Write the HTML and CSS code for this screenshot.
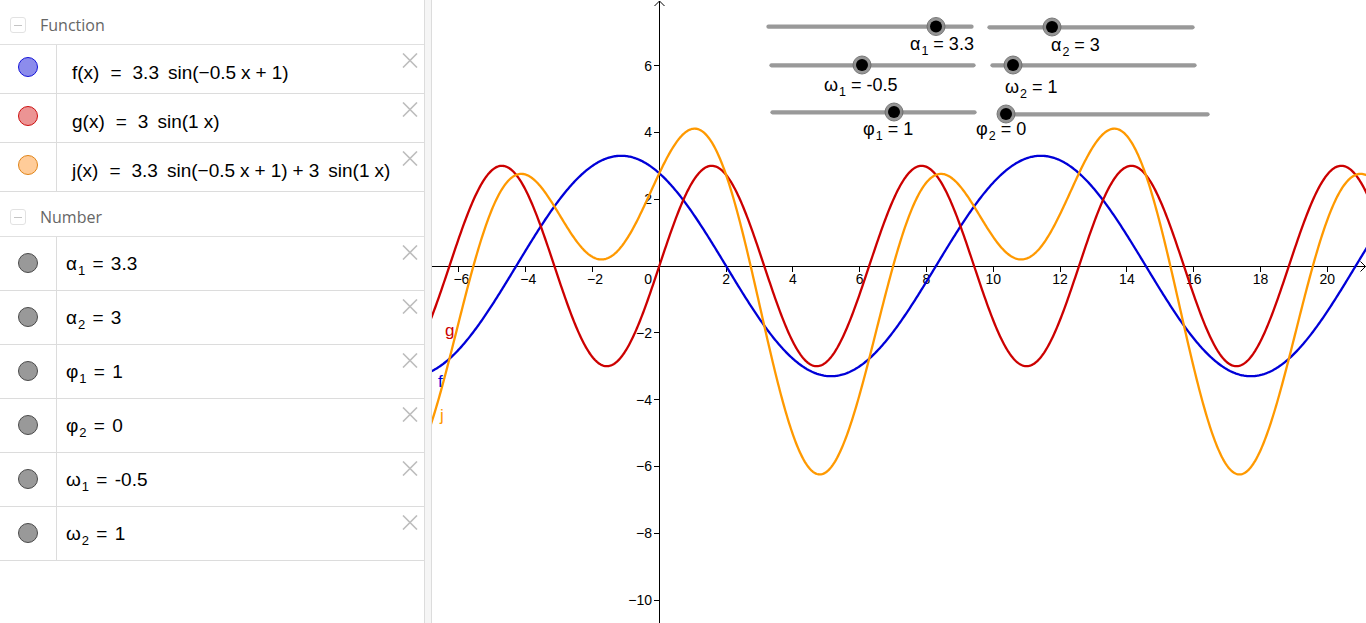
FILE: index.html
```html
<!DOCTYPE html>
<html lang="en">
<head>
<meta charset="utf-8">
<title>Graphing</title>
<link rel="stylesheet" href="styles.css">
</head>
<body>
<div class="app">
  <aside class="algebra">
    <div class="group-header"><span class="collapse"><span class="collapse-bar"></span></span><span class="group-title">Function</span></div>

    <div class="row fn-row">
      <div class="marker-cell"><span class="marker marker-f"></span></div>
      <div class="expr fn-expr">f(x)<span class="eq">=</span>3.3<span class="fn">sin(</span>−0.5<span class="th">x</span><span class="op">+</span>1)</div>
      <button class="close" aria-label="delete"><svg width="16" height="15" viewBox="0 0 16 15"><path d="M1 0.5L15 14.5M15 0.5L1 14.5"/></svg></button>
    </div>
    <div class="row fn-row">
      <div class="marker-cell"><span class="marker marker-g"></span></div>
      <div class="expr fn-expr">g(x)<span class="eq">=</span>3<span class="fn">sin(</span>1<span class="th">x</span>)</div>
      <button class="close" aria-label="delete"><svg width="16" height="15" viewBox="0 0 16 15"><path d="M1 0.5L15 14.5M15 0.5L1 14.5"/></svg></button>
    </div>
    <div class="row fn-row">
      <div class="marker-cell"><span class="marker marker-j"></span></div>
      <div class="expr fn-expr">j(x)<span class="eq">=</span>3.3<span class="fn">sin(</span>−0.5<span class="th">x</span><span class="op">+</span>1)<span class="op">+</span>3<span class="fn">sin(</span>1<span class="th">x</span>)</div>
      <button class="close" aria-label="delete"><svg width="16" height="15" viewBox="0 0 16 15"><path d="M1 0.5L15 14.5M15 0.5L1 14.5"/></svg></button>
    </div>

    <div class="group-header"><span class="collapse"><span class="collapse-bar"></span></span><span class="group-title">Number</span></div>

    <div class="row num-row">
      <div class="marker-cell"><span class="marker marker-n"></span></div>
      <div class="expr num-expr">α<sub>1</sub> = 3.3</div>
      <button class="close" aria-label="delete"><svg width="16" height="15" viewBox="0 0 16 15"><path d="M1 0.5L15 14.5M15 0.5L1 14.5"/></svg></button>
    </div>
    <div class="row num-row">
      <div class="marker-cell"><span class="marker marker-n"></span></div>
      <div class="expr num-expr">α<sub>2</sub> = 3</div>
      <button class="close" aria-label="delete"><svg width="16" height="15" viewBox="0 0 16 15"><path d="M1 0.5L15 14.5M15 0.5L1 14.5"/></svg></button>
    </div>
    <div class="row num-row">
      <div class="marker-cell"><span class="marker marker-n"></span></div>
      <div class="expr num-expr">φ<sub>1</sub> = 1</div>
      <button class="close" aria-label="delete"><svg width="16" height="15" viewBox="0 0 16 15"><path d="M1 0.5L15 14.5M15 0.5L1 14.5"/></svg></button>
    </div>
    <div class="row num-row">
      <div class="marker-cell"><span class="marker marker-n"></span></div>
      <div class="expr num-expr">φ<sub>2</sub> = 0</div>
      <button class="close" aria-label="delete"><svg width="16" height="15" viewBox="0 0 16 15"><path d="M1 0.5L15 14.5M15 0.5L1 14.5"/></svg></button>
    </div>
    <div class="row num-row">
      <div class="marker-cell"><span class="marker marker-n"></span></div>
      <div class="expr num-expr">ω<sub>1</sub> = -0.5</div>
      <button class="close" aria-label="delete"><svg width="16" height="15" viewBox="0 0 16 15"><path d="M1 0.5L15 14.5M15 0.5L1 14.5"/></svg></button>
    </div>
    <div class="row num-row">
      <div class="marker-cell"><span class="marker marker-n"></span></div>
      <div class="expr num-expr">ω<sub>2</sub> = 1</div>
      <button class="close" aria-label="delete"><svg width="16" height="15" viewBox="0 0 16 15"><path d="M1 0.5L15 14.5M15 0.5L1 14.5"/></svg></button>
    </div>
  </aside>

  <div class="splitter"></div>

  <main class="graph">
    <svg class="plot" width="934" height="623" viewBox="432 0 934 623">
      <g class="axes">
        <path d="M432 266.5H1365.5M1360.5 261.5L1365.5 266.5L1360.5 271.5"/>
        <path d="M659.5 623V1M654.5 6L659.5 1L664.5 6"/>
        <path d="M458.5 267v5M525.5 267v5M592.5 267v5M726.5 267v5M792.5 267v5M859.5 267v5M926.5 267v5M993.5 267v5M1060.5 267v5M1126.5 267v5M1193.5 267v5M1260.5 267v5M1327.5 267v5"/>
        <path d="M654 65.5h5M654 132.5h5M654 199.5h5M654 332.5h5M654 399.5h5M654 466.5h5M654 533.5h5M654 600.5h5"/>
      </g>
      <g class="ticks-x">
        <text x="461.4" y="283.5">−6</text>
        <text x="528.2" y="283.5">−4</text>
        <text x="595" y="283.5">−2</text>
        <text x="726.1" y="283.5">2</text>
        <text x="792.9" y="283.5">4</text>
        <text x="859.7" y="283.5">6</text>
        <text x="926.5" y="283.5">8</text>
        <text x="993.3" y="283.5">10</text>
        <text x="1060.1" y="283.5">12</text>
        <text x="1126.9" y="283.5">14</text>
        <text x="1193.7" y="283.5">16</text>
        <text x="1260.5" y="283.5">18</text>
        <text x="1327.3" y="283.5">20</text>
      </g>
      <g class="ticks-y">
        <text x="652" y="283.5">0</text>
        <text x="652" y="70.6">6</text>
        <text x="652" y="137.4">4</text>
        <text x="652" y="204.2">2</text>
        <text x="652" y="337.8">−2</text>
        <text x="652" y="404.6">−4</text>
        <text x="652" y="471.4">−6</text>
        <text x="652" y="538.2">−8</text>
        <text x="652" y="605">−10</text>
      </g>

      <polyline id="curve-f" class="curve curve-f" points=""/>
      <polyline id="curve-g" class="curve curve-g" points=""/>
      <polyline id="curve-j" class="curve curve-j" points=""/>

      <text class="flabel flabel-g" x="445" y="336">g</text>
      <text class="flabel flabel-f" x="438" y="387">f</text>
      <text class="flabel flabel-j" x="440" y="421">j</text>

      <g class="slider">
        <line x1="768.5" y1="26.7" x2="971.5" y2="26.7"/>
        <circle class="halo" cx="936" cy="26.5" r="9"/><circle class="knob" cx="936" cy="26.5" r="6"/>
        <text x="910" y="49.5">α<tspan class="sub" dx="1" dy="5">1</tspan><tspan dy="-5"> = 3.3</tspan></text>
      </g>
      <g class="slider">
        <line x1="989.5" y1="27.3" x2="1192.5" y2="27.3"/>
        <circle class="halo" cx="1052" cy="27" r="9"/><circle class="knob" cx="1052" cy="27" r="6"/>
        <text x="1051" y="50.5">α<tspan class="sub" dx="1" dy="5">2</tspan><tspan dy="-5"> = 3</tspan></text>
      </g>
      <g class="slider">
        <line x1="771.5" y1="65.3" x2="973.5" y2="65.3"/>
        <circle class="halo" cx="862" cy="65" r="9"/><circle class="knob" cx="862" cy="65" r="6"/>
        <text x="824" y="90.5">ω<tspan class="sub" dx="1" dy="5">1</tspan><tspan dy="-5"> = -0.5</tspan></text>
      </g>
      <g class="slider">
        <line x1="992.5" y1="65.3" x2="1194.5" y2="65.3"/>
        <circle class="halo" cx="1013" cy="65" r="9"/><circle class="knob" cx="1013" cy="65" r="6"/>
        <text x="1005" y="93">ω<tspan class="sub" dx="1" dy="5">2</tspan><tspan dy="-5"> = 1</tspan></text>
      </g>
      <g class="slider">
        <line x1="772.5" y1="112.3" x2="974.5" y2="112.3"/>
        <circle class="halo" cx="894" cy="112" r="9"/><circle class="knob" cx="894" cy="112" r="6"/>
        <text x="863" y="135">φ<tspan class="sub" dx="1" dy="5">1</tspan><tspan dy="-5"> = 1</tspan></text>
      </g>
      <g class="slider">
        <line x1="1000.5" y1="114.3" x2="1207.5" y2="114.3"/>
        <circle class="halo" cx="1006" cy="114" r="9"/><circle class="knob" cx="1006" cy="114" r="6"/>
        <text x="976" y="135">φ<tspan class="sub" dx="1" dy="5">2</tspan><tspan dy="-5"> = 0</tspan></text>
      </g>
    </svg>
  </main>
</div>
<script src="script.js"></script>
</body>
</html>
```

FILE: styles.css
```css
* { box-sizing: border-box; margin: 0; padding: 0; }
html, body { width: 1366px; height: 623px; overflow: hidden; background: #fff; }
body { font-family: "Liberation Sans", Arial, sans-serif; color: #000; }

.app { display: flex; height: 623px; }

.algebra {
  flex: none;
  width: 425px;
  border-right: 1px solid #dcdcdc;
  display: flex;
  flex-direction: column;
  background: #fff;
}

.splitter {
  flex: none;
  width: 7px;
  background: #f5f5f5;
  border-right: 1px solid #dcdcdc;
}

.graph { flex: 1; background: #fff; overflow: hidden; }
.plot { display: block; }

/* group headers */
.group-header {
  height: 45px;
  flex: none;
  display: flex;
  align-items: center;
  padding: 6px 0 0 10px;
  border-bottom: 1px solid #e0e0e0;
}
.collapse {
  width: 16px;
  height: 16px;
  border: 1px solid #e2e2e2;
  border-radius: 3px;
  display: flex;
  align-items: center;
  justify-content: center;
  margin-right: 14px;
}
.collapse-bar { width: 8px; height: 1px; background: #c4c4c4; }
.group-title {
  font-family: "Open Sans", "Liberation Sans", sans-serif;
  font-size: 16px;
  color: #666;
}

/* rows */
.row {
  flex: none;
  display: flex;
  align-items: center;
  border-bottom: 1px solid #dcdcdc;
}
.fn-row { height: 49px; }
.num-row { height: 54px; }

.marker-cell {
  flex: none;
  width: 57px;
  align-self: stretch;
  border-right: 1px solid #dcdcdc;
  display: flex;
  align-items: center;
  justify-content: center;
}
.fn-row .marker-cell { padding-bottom: 4px; }
.num-row .marker-cell { padding-bottom: 2px; }

.marker {
  width: 20px;
  height: 20px;
  border-radius: 50%;
  border: 1.5px solid #444;
}
.marker-f { background: #8c8cec; border-color: #1414d8; }
.marker-g { background: #ec9494; border-color: #cc1010; }
.marker-j { background: #ffcc99; border-color: #e08418; }
.marker-n { background: #999; border-color: #4a4a4a; }

.expr { flex: 1; white-space: nowrap; }
.fn-expr {
  font-size: 19px;
  padding: 8px 0 0 15px;
}
.fn-expr .eq { margin: 0 11px; }
.fn-expr .fn { margin-left: 9px; }
.fn-expr .th { margin-left: 5px; }
.fn-expr .op { margin: 0 5px; }
.num-expr {
  font-size: 19px;
  padding: 0 0 0 9px;
  word-spacing: 2px;
}
.num-expr sub {
  font-size: 13px;
  vertical-align: -5px;
  line-height: 0;
  margin-left: 1px;
}

.close {
  flex: none;
  align-self: flex-start;
  margin: 8px 6px 0 0;
  width: 16px;
  height: 15px;
  border: none;
  background: none;
  display: flex;
}
.close svg path { stroke: #bdbdbd; stroke-width: 1.6; fill: none; }

/* graph */
.axes path { stroke: #000; stroke-width: 1; fill: none; }
.ticks-x text, .ticks-y text {
  font-family: "Liberation Sans", Arial, sans-serif;
  font-size: 14px;
  fill: #000;
}
.ticks-x text { text-anchor: middle; }
.ticks-y text { text-anchor: end; }

.curve { fill: none; stroke-width: 2.3; stroke-linejoin: round; stroke-linecap: round; }
.curve-f { stroke: #0000d8; }
.curve-g { stroke: #cc0000; }
.curve-j { stroke: #ff9900; }

.flabel { font-family: "Liberation Sans", Arial, sans-serif; font-size: 17px; }
.flabel-f { fill: #0000d8; }
.flabel-g { fill: #cc0000; }
.flabel-j { fill: #ff9900; }

.slider line { stroke: #999; stroke-width: 4.3; stroke-linecap: round; }
.slider .halo { fill: #8a8a8a; stroke: #6a6a6a; stroke-width: 1; opacity: 0.9; }
.slider .knob { fill: #000; }
.slider text {
  font-family: "Liberation Sans", Arial, sans-serif;
  font-size: 18px;
  fill: #000;
}
.slider .sub { font-size: 12.5px; }
```

FILE: script.js
```js
(function () {
  var X0 = 659.3, Y0 = 266, S = 33.4;
  var fns = {
    f: function (x) { return 3.3 * Math.sin(-0.5 * x + 1); },
    g: function (x) { return 3 * Math.sin(x); },
    j: function (x) { return 3.3 * Math.sin(-0.5 * x + 1) + 3 * Math.sin(x); }
  };
  Object.keys(fns).forEach(function (id) {
    var fn = fns[id], pts = [];
    for (var px = 430; px <= 1368; px += 1) {
      var x = (px - X0) / S;
      pts.push(px + ',' + (Y0 - fn(x) * S).toFixed(2));
    }
    document.getElementById('curve-' + id).setAttribute('points', pts.join(' '));
  });
})();
```
